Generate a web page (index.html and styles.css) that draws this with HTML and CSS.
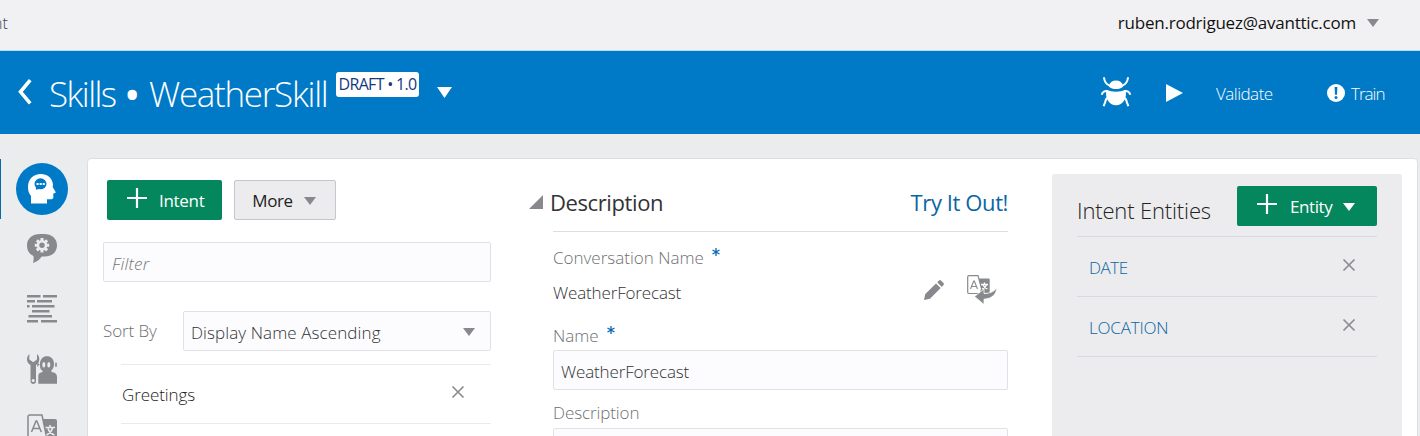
FILE: index.html
```
<!DOCTYPE html>
<html lang="en">
<head>
<meta charset="utf-8">
<title>Skills • WeatherSkill</title>
<link rel="stylesheet" href="styles.css">
</head>
<body>
<svg class="defs" width="0" height="0">
  <symbol id="close" viewBox="0 0 14 14"><path d="M1.500 1.500l11 11M12.500 1.500l-11 11" fill="none" stroke="#8a8d90" stroke-width="1.700"/></symbol>
  <symbol id="plus" viewBox="0 0 20 20"><path d="M0 10h20M10 0v20" stroke="#fff" stroke-width="2.200"/></symbol>
  <symbol id="down" viewBox="0 0 12 8" preserveAspectRatio="none"><path d="M0 0h12L6 8z" fill="currentColor"/></symbol>
</svg>
<div class="page">
  <header class="topbar">
    <span class="crumb">nt</span>
    <div class="user"><span>ruben.rodriguez@avanttic.com</span><svg class="arrow"><use href="#down"/></svg></div>
  </header>
  <div class="titlebar">
    <svg class="back" viewBox="0 0 14 26"><path d="M12.200 1.200L2.500 12.800l9.700 11.500" fill="none" stroke="#fff" stroke-width="3.600"/></svg>
    <h1 class="title"><span class="kind">Skills</span><span class="dot">•</span><span>WeatherSkill</span></h1>
    <span class="badge">DRAFT • 1.0</span>
    <svg class="title-arrow"><use href="#down"/></svg>
    <div class="actions">
      <svg class="bug" viewBox="0 0 30 30" fill="none" stroke="#fff" stroke-width="2">
        <path d="M3 .2c.2 4 2 7 6 8.600M27 .2c-.2 4-2 7-6 8.600"/>
        <path d="M8 8.500C9 5 11.500 3.400 15 3.400S21 5 22 8.500c.2 1-.2 1.500-1 2-3.700 2-8.300 2-12 0-.8-.5-1.200-1-1-2z" fill="#fff" stroke="none"/>
        <path d="M5.500 12.800c5.500 2.600 13.500 2.600 19 0C26.500 21 22 28.300 15 28.300S3.500 21 5.500 12.800z" fill="#fff" stroke="none"/>
        <path d="M6.500 14.300C4 13.600 1.500 14.800.7 17.800M23.500 14.300c2.500-.7 5 .5 5.800 3.500M7.500 20.800c-3 .7-3 2.200-3.200 4-.2 1.300-1.200 2.200-1.600 4.400M22.500 20.800c3 .7 3 2.200 3.200 4 .2 1.300 1.200 2.200 1.600 4.400"/>
      </svg>
      <svg class="play" viewBox="0 0 17 18"><path d="M0 0l17 9-17 9z" fill="#fff"/></svg>
      <span class="validate">Validate</span>
      <svg class="alert" viewBox="0 0 18 18"><circle cx="9" cy="9" r="9" fill="#fff"/><path d="M7.600 3h2.800l-.4 7.800H8z" fill="#007ac7"/><circle cx="9" cy="13.500" r="1.500" fill="#007ac7"/></svg>
      <span class="train">Train</span>
    </div>
  </div>
  <div class="main">
    <nav class="rail">
      <div class="active">
        <svg class="head" viewBox="0 0 28 30"><path d="M3 29.500V22C.8 19.500 0 16.500 0 13 0 5 5.500 0 12.800 0c6.500 0 11.500 4 12.200 10.500l-.3 2.500 3.200 5.500-2.700 1.200.2 3c0 1.800-1 2.600-2.700 2.600H19v4.200z" fill="#fff"/><ellipse cx="12.500" cy="9.800" rx="6" ry="5.500" fill="#007ac7"/><path d="M8 15.800l-.2-4.600 4.200 3.600z" fill="#007ac7"/><path d="M8.500 9h2.100v2H8.500zM11.600 9h2.100v2h-2.100zM14.700 9h2.100v2h-2.100z" fill="#fff"/></svg>
      </div>
      <svg class="ri bubble" viewBox="0 0 30 29"><path d="M13 0h4c7.500 0 13 4.500 13 11.200 0 6.800-5 11.300-12 11.300h-3.300c-1.500 2.500-4.300 5-8.700 6.500.6-2.300.8-4.200.4-7C2.500 20 0 16.500 0 11.200 0 4.500 5.500 0 13 0z" fill="#87898c"/>
        <g transform="translate(15 11.300)"><g stroke="#ebecee" stroke-width="3"><path d="M0-7.200V7.200M-7.200 0H7.200M-5.100-5.100L5.100 5.100M5.100-5.100L-5.100 5.100"/></g><circle r="5.300" fill="#ebecee"/><circle r="2.700" fill="#87898c"/></g></svg>
      <svg class="ri lines" viewBox="0 0 30 28"><path d="M0 1.200h13.500M16 1.200h14M0 6.200h8M10 6.200h15M0 11.200h2.500M5 11.200h22.500M5 16.200h17.500M1.500 21.200H25M0 26.300h11M14 26.300h16" stroke="#87898c" stroke-width="2.400"/></svg>
      <svg class="ri wrench" viewBox="0 0 30 30"><path d="M2.300 0C-1 3-.8 8.500 3.500 11V27c0 4 5.500 4 5.500 0V11c4-2.500 4.500-8 1-11v5.500L6.200 8.300 2.300 5.500z" fill="#87898c"/><circle cx="6.200" cy="26.600" r="1.500" fill="#ebecee"/><path d="M11.300 29.800V21.500c.5-2 1.900-3 4.200-3.400V16.600C13.300 16 12.800 12.500 13 9.500 13.300 5 16 2.300 20 2.300s6.800 2.700 7 7.200c.1 3-.7 5.500-2.500 6.800v1.600c3.800.6 5.500 2 5.500 5.100v6.800z" fill="#87898c"/><path d="M10.500 10.500h2M10.800 8.500v4" stroke="#87898c" stroke-width="1.200"/><ellipse cx="16.800" cy="10.800" rx="1.500" ry="2.700" fill="#ebecee"/><ellipse cx="21.800" cy="10.800" rx="1.500" ry="2.700" fill="#ebecee"/><path d="M29 8.800v4" stroke="#87898c" stroke-width="1.600"/></svg>
      <svg class="ri lang" viewBox="0 0 30 30"><path d="M14 5h14q2 0 2 2v23H21z" fill="#87898c"/><path d="M15 1H3Q1 1 1 3v27h20z" fill="#ebecee" stroke="#87898c" stroke-width="1.500"/><path d="M4.500 18L9 7h.8l4.500 11M6 14.500h7" fill="none" stroke="#87898c" stroke-width="1.500"/><path d="M23 11v2.500M18.500 13.500h9.500M25.500 14c-.8 3-3 5.500-6 7M21 14.500c1 3 3.500 5.500 6.500 6.500" fill="none" stroke="#ebecee" stroke-width="1.600"/></svg>
    </nav>
    <main class="panel">
      <section class="intents">
        <div class="buttons">
          <button class="btn green intent"><svg class="plus"><use href="#plus"/></svg><span>Intent</span></button>
          <button class="btn more"><span>More</span><svg class="arrow"><use href="#down"/></svg></button>
        </div>
        <div class="field filter"><span>Filter</span></div>
        <div class="sort">
          <span class="label">Sort By</span>
          <div class="field select"><span>Display Name Ascending</span><svg class="arrow"><use href="#down"/></svg></div>
        </div>
        <div class="item"><span>Greetings</span><svg class="x"><use href="#close"/></svg></div>
      </section>
      <section class="details">
        <div class="dhead">
          <svg class="disclosure" viewBox="0 0 14 14"><path d="M14 0v14H0z" fill="#87898c"/></svg>
          <h2>Description</h2>
          <a class="try">Try It Out!</a>
        </div>
        <div class="form">
          <div class="label conv">Conversation Name<svg class="star" viewBox="0 0 8 8"><path d="M4 0v8M.5 2l7 4M7.500 2l-7 4"/></svg></div>
          <div class="value">
            <span class="wf">WeatherForecast</span>
            <svg class="pencil" viewBox="0 0 20 20" fill="#87898c"><path d="M0 20l1.300-6L12 3.400l4.700 4.700L6 18.700zM13.200 2.200L15 .5q1-1 2 0L19.500 3q1 1 0 2l-1.700 1.900z"/></svg>
            <svg class="trans" viewBox="0 0 30 30"><path d="M12 3.500h9.500q1.200 0 1.200 1.200V18H12z" fill="#87898c"/><path d="M11 .7H2Q.7.700.7 2v15.300q0 1.200 1.300 1.200h11.500l1-5z" fill="#fff" stroke="#87898c" stroke-width="1.200"/><path d="M3.500 14L6.700 6h.6l3.200 8M4.500 11.500h5" fill="none" stroke="#87898c" stroke-width="1.100"/><path d="M17.500 7.500V9M14 9.500h7M20 9.500c-.8 2-2.500 3.500-5 4.500M16 10c.8 1.800 2.500 3.300 4.500 4" fill="none" stroke="#fff" stroke-width="1.300"/><path d="M7.500 21.500l9.500-7.500v4.500c5-.2 9.500-1 13-6-.8 7-5 11.200-13 11.700v5.300z" fill="#87898c" stroke="#fff" stroke-width=".8"/></svg>
          </div>
          <div class="label name">Name<svg class="star" viewBox="0 0 8 8"><path d="M4 0v8M.5 2l7 4M7.500 2l-7 4"/></svg></div>
          <div class="field namefield"><span class="wf">WeatherForecast</span></div>
          <div class="label desc">Description</div>
          <div class="field area"></div>
        </div>
      </section>
      <aside class="entities">
        <div class="ehead">
          <h2>Intent Entities</h2>
          <button class="btn green entity"><svg class="plus"><use href="#plus"/></svg><span>Entity</span><svg class="arrow"><use href="#down"/></svg></button>
        </div>
        <div class="erow"><a class="date">DATE</a><svg class="x"><use href="#close"/></svg></div>
        <div class="erow"><a class="loc">LOCATION</a><svg class="x"><use href="#close"/></svg></div>
      </aside>
    </main>
  </div>
</div>
</body>
</html>
```
FILE: styles.css
```
* { box-sizing: border-box; }
body { margin: 0; font-family: "Open Sans", "Noto Sans", sans-serif; font-size: 17px; font-weight: 340; line-height: 24px; color: #222; background: #ebecee; }
.defs { display: none; }
svg { display: block; flex: none; overflow: visible; }
span, a, h1, h2, .label { white-space: nowrap; }
h1, h2 { margin: 0; font-weight: 340; }
.page { width: 1420px; height: 436px; overflow: hidden; display: flex; flex-direction: column; }
.topbar { height: 51px; flex: none; background: #f1f1f3; border-bottom: 1px solid #b5dcf2; display: flex; justify-content: space-between; padding: 11px 41px 0 0; }
.crumb { margin-left: -7px; font-size: 16px; color: #414552; }
.user { display: flex; letter-spacing: -.22px; font-weight: 370; color: #111; }
.user .arrow { margin: 8px 0 0 11px; }
.arrow { width: 12px; height: 8px; color: #87898c; }
.titlebar { height: 83px; flex: none; background: #007ac7; color: #fff; display: flex; align-items: flex-start; padding-left: 18px; }
.back { width: 14px; height: 26px; margin-top: 28px; }
.title { display: flex; font-size: 35px; font-weight: 300; line-height: 48px; letter-spacing: -1.3px; margin: 19px 0 0 17px; width: 287px; }
.kind { width: 76px; letter-spacing: -1.6px; }
.dot { width: 24px; font-weight: 600; font-size: 38px; }
.badge { width: 83px; height: 25px; margin-top: 21px; border-radius: 3px; background: #fff; color: #14387f; font-size: 16px; font-weight: 400; letter-spacing: -.7px; text-align: center; }
.title-arrow { width: 15px; height: 11px; margin: 36px 0 0 18px; }
.actions { display: flex; margin-left: auto; padding-right: 35px; }
.bug { width: 30px; height: 30px; margin-top: 26px; }
.play { width: 17px; height: 18px; margin: 33px 0 0 35px; }
.validate { width: 58px; margin: 31px 0 0 33px; letter-spacing: -.5px; }
.alert { width: 18px; height: 18px; margin: 33px 0 0 53px; }
.train { width: 34px; margin: 31px 0 0 6px; letter-spacing: -1px; }
.main { display: flex; height: 302px; }
.rail { width: 87px; flex: none; padding: 29px 0 0 16px; }
.active { width: 52px; height: 52px; border-radius: 50%; background: #007ac7; padding: 11px 0 0 12px; position: relative; }
.active::before { content: ""; position: absolute; left: -16px; top: -4px; width: 1px; height: 60px; background: #0969a8; }
.head { width: 28px; height: 30px; }
.ri { width: 30px; margin-left: 11px; }
.bubble { height: 29px; margin-top: 19px; }
.lines { height: 28px; margin-top: 32px; }
.wrench { height: 30px; margin-top: 31px; }
.lang { height: 30px; margin-top: 30px; }
.panel { width: 1331px; height: 300px; flex: none; margin-top: 24px; background: #fff; border: 1px solid #dcdee0; border-radius: 4px; display: flex; }
.intents { width: 388px; margin: 21px 0 0 15px; }
.buttons { display: flex; gap: 12px; padding-left: 4px; }
.btn { height: 40px; border: 0; border-radius: 2px; font: inherit; display: flex; align-items: flex-start; padding: 0; }
.btn span { margin-top: 9px; }
.green { background: #04875c; color: #fff; }
.green span { font-weight: 400; }
.plus { width: 20px; height: 20px; margin: 8px 0 0 20px; }
.intent { width: 115px; }
.intent span { margin-left: 12px; letter-spacing: -.3px; }
.more { width: 102px; background: #ececee; border: 1px solid #c4c6ca; color: #222; font-weight: 370; padding-left: 17px; }
.more span { width: 41px; margin-top: 8px; letter-spacing: -.4px; }
.more .arrow { margin: 16px 0 0 11px; }
.field { height: 40px; background: #fcfcfe; border: 1px solid #dfe1e5; border-radius: 2px; }
.filter { margin-top: 22px; padding: 9px 8px; font-style: italic; letter-spacing: .2px; color: #72767a; }
.label { display: flex; letter-spacing: -.1px; color: #6d7073; }
.sort { display: flex; margin-top: 29px; }
.sort .label { width: 80px; margin-top: 8px; }
.select { flex: 1; display: flex; justify-content: space-between; padding: 9px 15px 0 7px; color: #333; letter-spacing: .1px; }
.select .arrow { margin-top: 7px; }
.item { display: flex; justify-content: space-between; margin: 13px 0 0 18px; height: 60px; border: solid #e8eaec; border-width: 1px 0; padding: 18px 26px 0 1px; letter-spacing: -.1px; }
.x { width: 14px; height: 14px; }
.item .x { margin-top: 2px; }
.details { width: 480px; margin: 28px 0 0 37px; }
.dhead { display: flex; }
.disclosure { width: 14px; height: 14px; margin: 8px 0 0 1px; }
h2 { font-size: 22px; line-height: 30px; }
.dhead h2 { margin-left: 7px; letter-spacing: -.4px; font-weight: 380; color: #333; }
.try { margin-left: auto; font-size: 22px; line-height: 30px; letter-spacing: -.4px; color: #0a66a3; font-weight: 380; }
.form { margin: 14px 0 0 25px; border-top: 1px solid #dcdee0; width: 455px; }
.star { width: 8px; height: 8px; margin-left: 8px; fill: none; stroke: #0a66b3; stroke-width: 1.300; }
.conv { margin-top: 14px; letter-spacing: 0; }
.conv .star, .name .star { margin-top: 2px; }
.value { display: flex; padding-top: 11px; height: 43px; }
.wf { letter-spacing: -.15px; width: 371px; color: #333; }
.pencil { width: 20px; height: 20px; margin-top: -1px; }
.trans { width: 30px; height: 30px; margin: -6px 0 0 23px; }
.name { margin-top: 11px; letter-spacing: 0; }
.namefield { margin-top: 2px; padding: 9px 7px; }
.desc { margin-top: 11px; }
.area { margin-top: 3px; }
.entities { width: 350px; margin: 15px 0 0 44px; background: #ececee; border-radius: 2px 2px 0 0; padding: 12px 25px 0; }
.ehead { display: flex; justify-content: space-between; height: 51px; border-bottom: 1px solid #d3dbe0; }
.ehead h2 { margin-top: 9px; letter-spacing: -.15px; color: #222; }
.entity { width: 140px; }
.entity span { margin-left: 13px; letter-spacing: -.4px; }
.entity .arrow { color: #fff; margin: 17px 0 0 11px; }
.erow { display: flex; justify-content: space-between; height: 60px; border-bottom: 1px solid #d3dbe0; padding: 19px 21px 0 12px; color: #0a66a3; }
.erow a { letter-spacing: -.5px; }
.erow .loc { letter-spacing: -.2px; }
.erow .x { margin-top: 2px; }
```
